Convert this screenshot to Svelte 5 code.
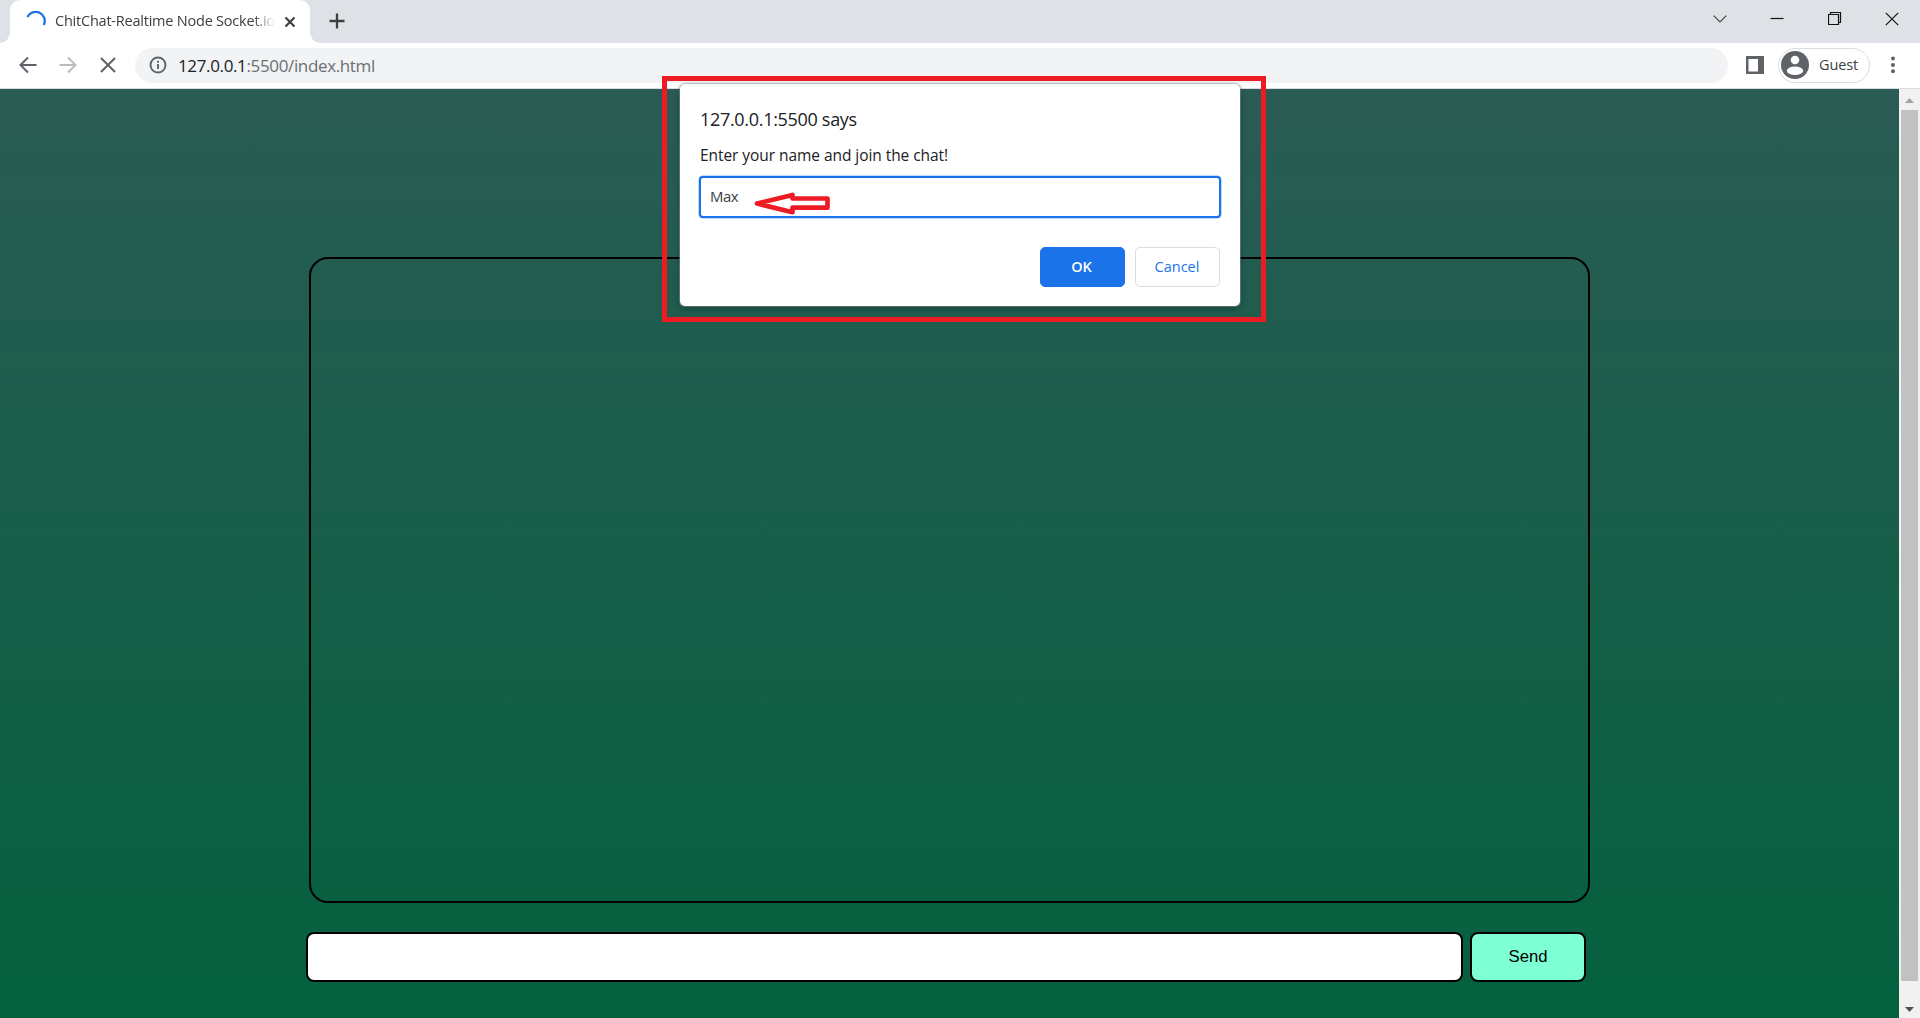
<script>
  let name = $state('Max');
  let message = $state('');
</script>

<div class="window">
  <header class="tabstrip">
    <div class="tab">
      <svg class="spinner" width="20" height="20" viewBox="0 0 20 20"><path d="M1.300 6A9 9 0 0 1 17.800 14" /></svg>
      <span class="tab-title">ChitChat-Realtime Node Socket.io</span>
      <svg class="tab-close" width="12" height="12" viewBox="0 0 12 12"><path d="M1.500 1.500l9 9M10.500 1.500l-9 9" /></svg>
    </div>
    <svg class="plus" width="16" height="16" viewBox="0 0 16 16"><path d="M8 .5v15M.5 8h15" /></svg>
    <div class="controls">
      <svg width="14" height="14" viewBox="0 0 14 14"><path d="M.7 3.700L7 10l6.300-6.300" /></svg>
      <svg width="14" height="14" viewBox="0 0 14 14"><path class="dark" d="M.5 6.500h13" /></svg>
      <svg width="14" height="14" viewBox="0 0 14 14"><path class="dark" d="M.5 2.500h10v10H.5zM2.500 2.500v-2h10v10h-2" /></svg>
      <svg width="14" height="14" viewBox="0 0 14 14"><path class="dark" d="M.8 .8l12.400 12.400M13.200 .8L.8 13.200" /></svg>
    </div>
  </header>

  <nav class="toolbar">
    <svg class="nav" width="18" height="18" viewBox="0 0 18 18"><path d="M17.500 9H2M9 1.500L1.500 9l7.500 7.500" /></svg>
    <svg class="nav faded" width="18" height="18" viewBox="0 0 18 18"><path d="M.5 9H16M9 1.500L16.500 9 9 16.500" /></svg>
    <svg class="nav" width="18" height="18" viewBox="0 0 18 18"><path d="M2 2l14 14M16 2L2 16" /></svg>
    <div class="address">
      <svg class="info" width="18" height="18" viewBox="0 0 18 18"><circle cx="9" cy="9" r="7.500" /><path d="M9 8v5M9 4.700v2" /></svg>
      <span class="url"><b>127.0.0.1</b>:5500/index.html</span>
    </div>
    <svg class="panel" width="18" height="18" viewBox="0 0 18 18"><path fill-rule="evenodd" d="M0 0h18v18H0zM2.500 3v12.500H12V3z" /></svg>
    <div class="profile">
      <svg width="28" height="28" viewBox="0 0 28 28"><circle cx="14" cy="14" r="14" fill="#5f6368" /><circle cx="14" cy="9" r="4.300" fill="#fff" /><ellipse cx="14" cy="19.800" rx="8.200" ry="4.300" fill="#fff" /></svg>
      <span>Guest</span>
    </div>
    <svg class="dots" width="4" height="18" viewBox="0 0 4 18"><circle cx="2" cy="2.500" r="2" /><circle cx="2" cy="9" r="2" /><circle cx="2" cy="15.300" r="2" /></svg>
  </nav>

  <div class="viewport">
    <main class="page">
      <div class="messages"></div>
      <form class="composer">
        <input class="compose" bind:value={message} aria-label="Message" />
        <button class="send" type="button">Send</button>
      </form>
    </main>
    <div class="scrollbar">
      <svg width="9" height="5" viewBox="0 0 9 5"><path fill="#a3a3a3" d="M0 5L4.500 0 9 5z" /></svg>
      <div class="thumb"></div>
      <svg width="9" height="5" viewBox="0 0 9 5"><path fill="#505050" d="M0 0h9L4.500 5z" /></svg>
    </div>
  </div>

  <section class="dialog">
    <h1>127.0.0.1:5500 says</h1>
    <p>Enter your name and join the chat!</p>
    <input class="prompt" bind:value={name} aria-label="Name" />
    <div class="actions">
      <button class="ok">OK</button>
      <button class="cancel">Cancel</button>
    </div>
  </section>

  <div class="highlight"></div>
  <svg class="arrow" width="80" height="28" viewBox="0 0 80 28"><path d="M4 13.500L39.500 5V8.500H74.500V17.700H39.500V22.200Z" /></svg>
</div>

<style>
  :global(body) { overflow: hidden; }
  * { box-sizing: border-box; }
  svg { display: block; flex: none; fill: none; }
  button, input { margin: 0; font-family: inherit; outline: 0; }
  .window {
    position: relative;
    display: flex;
    flex-direction: column;
    width: 1920px;
    height: 1018px;
    overflow: hidden;
    font-family: "Open Sans", "Noto Sans", sans-serif;
    white-space: nowrap;
  }
  .tabstrip { display: flex; flex: none; height: 43px; padding-left: 10px; background: #dee1e6; }
  .tab {
    position: relative;
    display: flex;
    align-items: center;
    width: 300px;
    height: 43px;
    padding: 0 14px 9px 16px;
    border-radius: 10px 10px 0 0;
    background: #fff;
  }
  .tab::before, .tab::after {
    content: "";
    position: absolute;
    bottom: 0;
    width: 10px;
    height: 10px;
  }
  .tab::before { left: -10px; background: radial-gradient(circle at 0 0, transparent 9.500px, #fff 10px); }
  .tab::after { right: -10px; background: radial-gradient(circle at 100% 0, transparent 9.500px, #fff 10px); }
  .spinner { margin-top: 8px; stroke: #1a73e8; stroke-width: 2.300; }
  .tab-title {
    width: 219px;
    margin: 8px 0 0 9px;
    overflow: hidden;
    color: #3c4043;
    font-size: 14.500px;
    line-height: 20px;
    letter-spacing: -0.220px;
    mask-image: linear-gradient(90deg, #000 198px, transparent 220px);
  }
  .tab-close { margin: 9px 0 0 10px; stroke: #3c4043; stroke-width: 2.200; }
  .plus { margin: 13px 0 0 19px; stroke: #3c4043; stroke-width: 2.300; }
  .controls { display: flex; gap: 43.300px; margin: 12px 21px 0 auto; }
  .controls svg { stroke: #444; stroke-width: 1.200; }
  .controls .dark { stroke: #111; }
  .toolbar {
    display: flex;
    flex: none;
    align-items: center;
    height: 46px;
    padding: 0 25px 1px 18px;
    border-bottom: 1px solid #dadce0;
    background: #fff;
  }
  .nav { position: relative; left: 1px; margin-right: 22px; stroke: #5f6368; stroke-width: 2; }
  .nav.faded { stroke: #babcbe; }
  .address {
    display: flex;
    align-items: center;
    width: 1593px;
    height: 35px;
    margin-left: -3px;
    padding-left: 14px;
    border-radius: 18px;
    background: #f1f3f4;
  }
  .info { stroke: #5f6368; stroke-width: 1.900; }
  .url { margin-left: 11px; color: #6b6f73; font-size: 17px; letter-spacing: -0.360px; }
  .url b { color: #202124; font-weight: 400; }
  .panel { margin-left: 18px; fill: #5f6368; }
  .profile {
    display: flex;
    align-items: center;
    width: 92px;
    height: 35px;
    margin-left: 14px;
    padding-left: 2px;
    border: 1px solid #dadce0;
    border-radius: 18px;
    color: #3c4043;
    font-size: 14.500px;
    letter-spacing: -0.150px;
  }
  .profile span { margin: -1px 0 0 10px; }
  .dots { margin-left: auto; fill: #5f6368; }
  .viewport { display: flex; flex: 1; }
  .page {
    display: flex;
    flex-direction: column;
    width: 1899px;
    padding-top: 168px;
    background: linear-gradient(#2a5b54, #04613e);
  }
  .messages { width: 1281px; height: 646px; margin-left: 309px; border: 2px solid #000; border-radius: 19px; }
  .composer { display: flex; gap: 7px; margin: 29px 0 0 306px; }
  .compose { width: 1157px; height: 50px; padding: 0 8px; border: 2px solid #000; border-radius: 8px; background: #fff; }
  .send {
    width: 116px;
    height: 50px;
    padding: 0;
    border: 2px solid #000;
    border-radius: 8px;
    background: #7fffd4;
    color: #000;
    font: 16.670px "Liberation Sans", Arial, sans-serif;
  }
  .scrollbar {
    display: flex;
    flex-direction: column;
    align-items: center;
    justify-content: space-between;
    width: 21px;
    padding: 9px 0 6px;
    background: #f1f1f1;
  }
  .thumb { width: 17px; height: 871px; margin: 7px 0 auto; background: #c1c1c1; }
  .dialog {
    position: absolute;
    left: 680px;
    top: 84px;
    width: 560px;
    height: 222px;
    padding: 0 19px;
    border-radius: 5px;
    background: #fff;
    box-shadow: 0 0 1px 1px rgba(130, 145, 140, 0.600), 0 3px 7px rgba(0, 0, 0, 0.300);
    color: #202124;
  }
  h1 { margin: 22px 0 0 1px; font-size: 18px; font-weight: 400; line-height: 26px; letter-spacing: -0.310px; }
  p { margin: 12px 0 0 1px; font-size: 15.500px; line-height: 22px; letter-spacing: -0.060px; }
  .prompt {
    display: block;
    width: 522px;
    height: 42px;
    margin-top: 10px;
    padding: 0 9px 2px;
    border: 2px solid #1a73e8;
    border-radius: 4px;
    box-shadow: 0 0 0 0.500px #8ab4f8;
    background: #fff;
    color: #3c4043;
    font-size: 15px;
    letter-spacing: -0.500px;
  }
  .actions { display: flex; justify-content: flex-end; gap: 10px; margin: 29px 1px 0 0; }
  .actions button {
    width: 85px;
    height: 40px;
    padding: 0 1px 2px 0;
    border: 1px solid #dadce0;
    border-radius: 5px;
    background: #fff;
    color: #1a73e8;
    font-size: 14.500px;
    font-weight: 500;
  }
  .actions .ok { padding-right: 2px; border-color: #1a73e8; background: #1a73e8; color: #fff; font-weight: 600; }
  .highlight { position: absolute; left: 662px; top: 76px; width: 604px; height: 246px; border: 5px solid #ed1c24; }
  .arrow { position: absolute; left: 753px; top: 190px; stroke: #ed1c24; stroke-width: 4.700; stroke-linejoin: round; }
</style>
